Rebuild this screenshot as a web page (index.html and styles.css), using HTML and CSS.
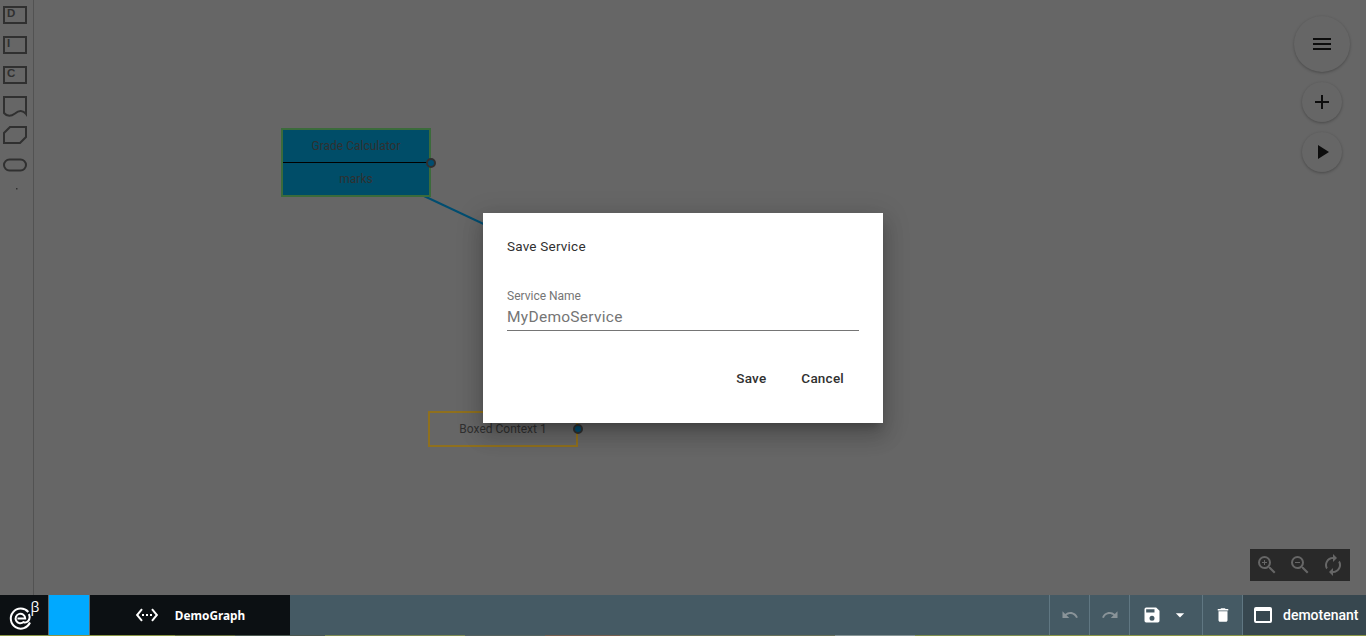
FILE: index.html
```html
<!DOCTYPE html>
<html lang="en">
<head>
<meta charset="utf-8">
<title>DemoGraph</title>
<link rel="stylesheet" href="styles.css">
</head>
<body>
<div class="app">
  <div class="workspace">
    <aside class="palette">
      <svg class="shapes" width="33" height="200" fill="none" stroke="#303030" stroke-width="2">
        <path d="M4 7h22v16H4zM4 37h22v16H4zM4 67h22v16H4z"/>
        <path d="M4 97h22v17c-3-4-7-4-11-.5c-4 3-8 3-11-.5z"/>
        <path d="M10 127h16v10l-6 6H4v-10z"/>
        <rect x="4" y="159.500" width="22" height="11" rx="5.500"/>
        <rect x="16" y="188" width="1.500" height="1.500" fill="#303030" stroke="none"/>
        <g class="shape-letter" stroke="none"><text x="7" y="17">D</text><text x="7" y="47">I</text><text x="7" y="77">C</text></g>
      </svg>
    </aside>
    <main class="canvas">
      <svg class="edge" width="520" height="240"><path d="M390 196L486 241" stroke="#004d70" stroke-width="2"/></svg>
      <div class="node grade"><div class="node-title">Grade Calculator</div><div class="node-input">marks</div><i class="port"></i></div>
      <div class="node context">Boxed Context 1<i class="port"></i></div>
      <div class="actions">
        <div class="fab large"><svg width="24" height="24"><path d="M3 6h18v2H3zM3 11h18v2H3zM3 16h18v2H3z"/></svg></div>
        <div class="fab"><svg width="24" height="24"><path d="M19 13h-6v6h-2v-6H5v-2h6V5h2v6h6z"/></svg></div>
        <div class="fab"><svg width="24" height="24"><path d="M8 5v14l11-7z"/></svg></div>
      </div>
      <div class="zoom-bar">
        <svg width="24" height="24" viewBox="0 0 24 24"><path d="M15.500 14h-.79l-.28-.27A6.470 6.470 0 0 0 16 9.500 6.500 6.500 0 1 0 9.500 16c1.610 0 3.090-.59 4.230-1.570l.27.28v.79l5 4.990L20.490 19zM9.500 14C7.010 14 5 11.990 5 9.500S7.010 5 9.500 5 14 7.010 14 9.500 11.990 14 9.500 14zM12 10h-2v2H9v-2H7V9h2V7h1v2h2z"/></svg>
        <svg width="24" height="24" viewBox="0 0 24 24"><path d="M15.500 14h-.79l-.28-.27A6.470 6.470 0 0 0 16 9.500 6.500 6.500 0 1 0 9.500 16c1.610 0 3.090-.59 4.230-1.570l.27.28v.79l5 4.990L20.490 19zM9.500 14C7.010 14 5 11.990 5 9.500S7.010 5 9.500 5 14 7.010 14 9.500 11.990 14 9.500 14zM7 9h5v1H7z"/></svg>
        <svg width="24" height="24" viewBox="0 0 24 24"><path d="M12 6v3l4-4-4-4v3a8 8 0 0 0-6.760 12.260L6.700 14.800A5.870 5.870 0 0 1 6 12c0-3.310 2.690-6 6-6zm6.760 1.740L17.300 9.200c.44.84.7 1.790.7 2.800 0 3.310-2.690 6-6 6v-3l-4 4 4 4v-3a8 8 0 0 0 6.760-12.260z"/></svg>
      </div>
    </main>
  </div>
  <footer class="toolbar">
    <div class="logo"><svg width="48" height="40" fill="none" stroke="#fff"><path d="M28.300 17A10 10 0 1 0 30 27.500" stroke-width="2"/><path d="M17.500 23.500h7.700a4.800 4.800 0 1 0-1.600 3.600c1.800 1 4.600-.2 5.600-2.600c.7-2 .4-4-.3-5.500" stroke-width="2"/><text class="beta" x="30.500" y="17">β</text></svg></div>
    <div class="accent"></div>
    <div class="graph"><svg width="24" height="24" viewBox="0 0 24 24"><path d="M7.770 6.760L6.230 5.480.82 12l5.410 6.520 1.540-1.280L3.420 12zM7 13h2v-2H7zm10-2h-2v2h2zm-6 2h2v-2h-2zm6.770-7.520l-1.540 1.280L20.580 12l-4.350 5.240 1.540 1.280L23.180 12z"/></svg><span>DemoGraph</span></div>
    <div class="spacer"></div>
    <div class="tool muted"><svg width="18" height="18" viewBox="0 0 24 24"><path d="M12.500 8c-2.650 0-5.050.99-6.900 2.600L2 7v9h9l-3.620-3.620c1.390-1.160 3.160-1.880 5.120-1.880 3.540 0 6.550 2.310 7.600 5.500l2.370-.78C21.080 11.030 17.150 8 12.500 8z"/></svg></div>
    <div class="tool muted"><svg width="18" height="18" viewBox="0 0 24 24"><path d="M18.400 10.600C16.550 8.990 14.150 8 11.500 8c-4.650 0-8.580 3.030-9.960 7.220L3.900 16a8 8 0 0 1 7.600-5.500c1.950 0 3.730.72 5.120 1.880L13 16h9V7z"/></svg></div>
    <div class="tool save-tool"><svg width="20" height="20" viewBox="0 0 24 24"><path d="M17 3H5a2 2 0 0 0-2 2v14a2 2 0 0 0 2 2h14a2 2 0 0 0 2-2V7zm-5 16a3 3 0 1 1 0-6 3 3 0 0 1 0 6zm3-10H5V5h10z"/></svg><svg width="20" height="20" viewBox="0 0 24 24"><path d="M7 10l5 5 5-5z"/></svg></div>
    <div class="tool"><svg width="18" height="18" viewBox="0 0 24 24"><path d="M6 19c0 1.100.9 2 2 2h8c1.100 0 2-.9 2-2V7H6zM19 4h-3.500l-1-1h-5l-1 1H5v2h14z"/></svg></div>
    <div class="tenant"><svg width="18" height="16"><path fill-rule="evenodd" d="M2 0h14a2 2 0 0 1 2 2v12a2 2 0 0 1-2 2H2a2 2 0 0 1-2-2V2a2 2 0 0 1 2-2zM2 4v10h14V4z"/></svg><span>demotenant</span></div>
  </footer>
  <div class="baseline"></div>
  <section class="dialog">
    <h1>Save Service</h1>
    <label>Service Name</label>
    <div class="field">MyDemoService</div>
    <div class="buttons"><button>Save</button><button>Cancel</button></div>
  </section>
</div>
</body>
</html>
```
FILE: styles.css
```css
* { box-sizing: border-box; }
body { margin: 0; font-family: Roboto, "Liberation Sans", sans-serif; }
.app { position: relative; width: 1366px; height: 636px; overflow: hidden; background: #666; display: flex; flex-direction: column; }
.workspace { display: flex; height: 595px; }
.palette { width: 34px; border-right: 1px solid #525252; }
.shapes { display: block; }
.shape-letter { font: 700 11.5px "Liberation Sans", sans-serif; fill: #303030; }
.canvas { position: relative; flex: 1; }
.edge { position: absolute; left: 0; top: 0; }
.node { position: absolute; width: 150px; font-size: 12px; color: #303030; text-align: center; }
.grade { left: 247px; top: 128px; height: 69px; background: #004d68; border: 2px solid #3b6b3b; }
.node-title { height: 33px; line-height: 32px; border-bottom: 1px solid #000; }
.node-input { line-height: 33px; }
.context { left: 394px; top: 411px; height: 36px; line-height: 32px; border: 2px solid #8f701e; }
.port { position: absolute; width: 10px; height: 10px; border: 2px solid #303030; border-radius: 50%; background: #004d70; right: -7px; top: 28px; }
.context .port { top: 11px; }
.actions { position: absolute; right: 16px; top: 16px; display: flex; flex-direction: column; align-items: center; gap: 10px; }
.fab { width: 40px; height: 40px; border-radius: 50%; display: grid; place-items: center; background: #666; fill: #0d0d0d; box-shadow: 0 1px 3px rgba(0,0,0,.28); }
.fab.large { width: 56px; height: 56px; }
.zoom-bar { position: absolute; right: 16px; bottom: 14px; width: 100px; height: 32px; background: #292929; fill: #666; display: flex; align-items: center; justify-content: space-between; padding: 0 5px; }
.toolbar { height: 40px; display: flex; background: #455a64; color: #fff; fill: #fff; }
.logo { width: 48px; background: #0c1013; }
.beta { font: 14px "Open Sans", sans-serif; fill: #fff; stroke: none; }
.accent { width: 42px; background: #00a9ff; border: solid #5d6c74; border-width: 0 1px; }
.graph { width: 200px; background: #0c1013; display: flex; align-items: center; justify-content: center; gap: 16px; font: 700 11.8px "Noto Sans", sans-serif; }
.spacer { flex: 1; }
.tool { width: 40px; display: flex; align-items: center; justify-content: center; border-left: 1px solid #607782; }
.tool.muted { fill: #899398; }
.save-tool { width: 73px; gap: 8px; }
.tenant { width: 124px; background: #37474f; border-left: 1px solid #607782; display: flex; align-items: center; padding-left: 11px; gap: 11px; font-size: 14px; font-weight: 500; }
.baseline { height: 1px; background: linear-gradient(90deg, #8a9645 0 175px, #66703f 175px 235px, #4d5950 235px 325px, #7d8a52 325px 465px, #56635f 465px 545px, #755f4d 545px 620px, #68715a 620px 835px, #879594 835px 915px, #7f8f4f 915px 1050px, #8a9645 1050px); }
.dialog { position: absolute; left: 483px; top: 213px; width: 400px; height: 210px; padding: 24px; background: #fff; color: #303030; box-shadow: 0 7px 8px -4px rgba(0,0,0,.2), 0 13px 19px 2px rgba(0,0,0,.14), 0 5px 24px 4px rgba(0,0,0,.12); display: flex; flex-direction: column; }
.dialog h1 { margin: 0; font-size: 13.5px; letter-spacing: .22px; line-height: 19px; font-weight: 400; }
.dialog label { margin-top: 32px; font-size: 12px; line-height: 16px; color: #757575; }
.field { height: 27px; border-bottom: 1px solid #757575; font-size: 15.5px; letter-spacing: .28px; line-height: 26px; color: #757575; }
.buttons { display: flex; justify-content: flex-end; gap: 5px; margin-top: 29px; }
.buttons button { height: 36px; padding: 0 15px; border: 0; background: none; color: #303030; font: 500 13.5px Roboto, sans-serif; letter-spacing: .22px; }
```
